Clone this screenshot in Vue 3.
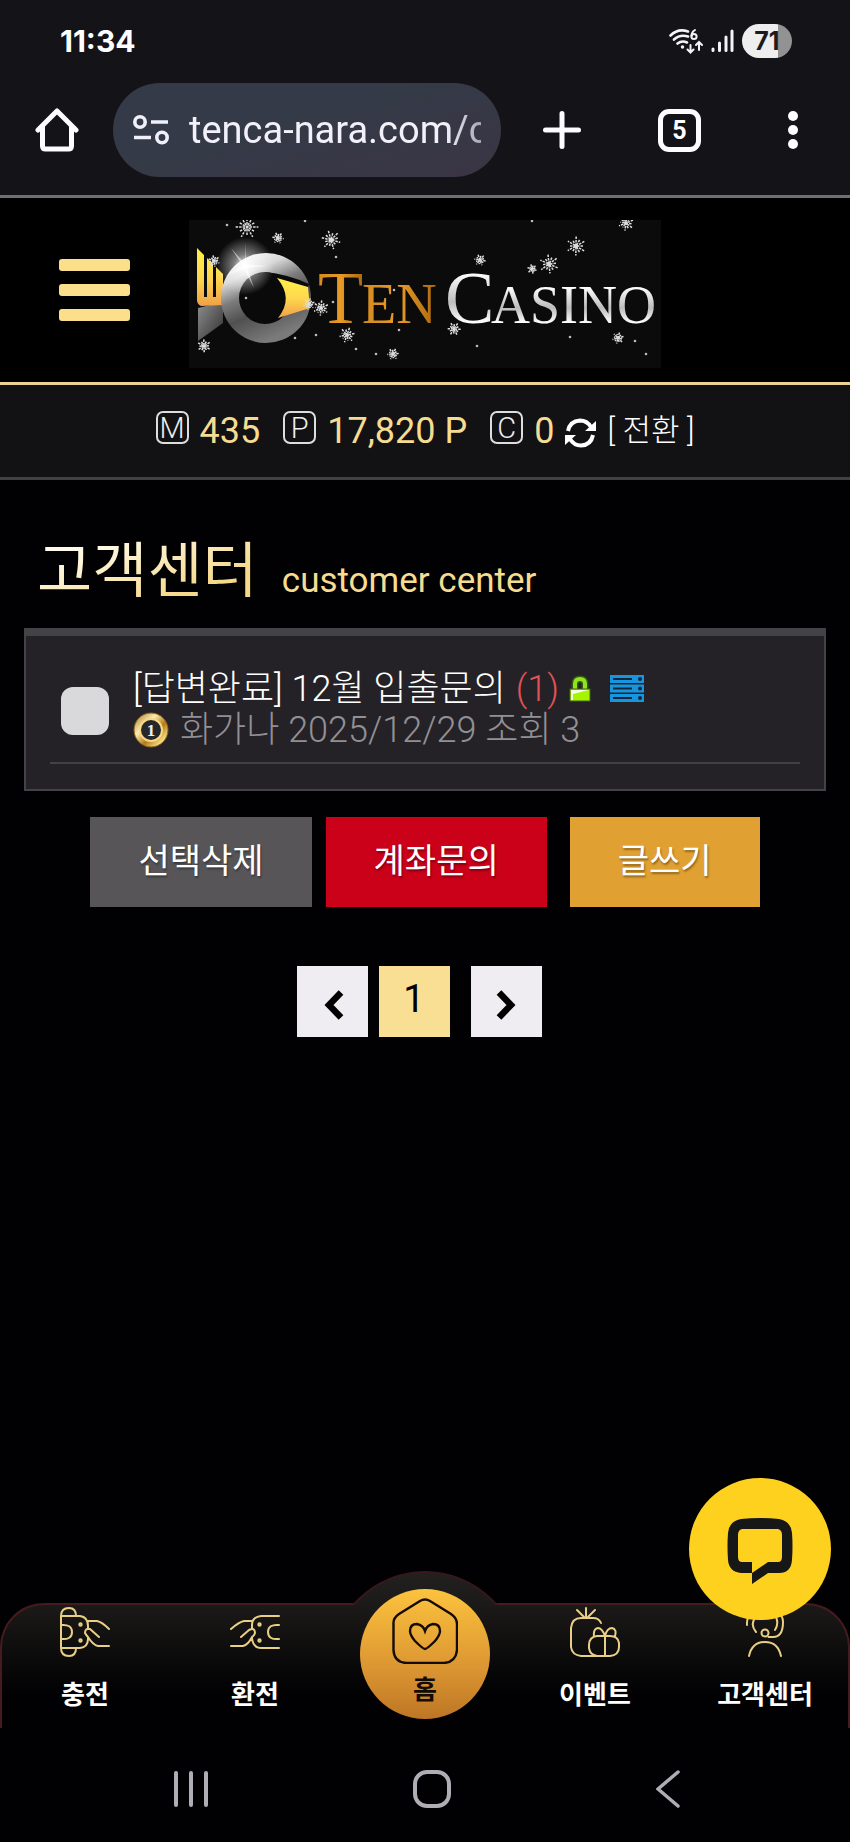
<script setup>
import { ref } from 'vue'

const url = ref('tenca-nara.com/c')
const checked = ref(false)

const flakes = [
  { x: 58, y: 7, r: 12 }, { x: 89, y: 18, r: 6 }, { x: 142, y: 20, r: 10 }, { x: 25, y: 41, r: 6 },
  { x: 15, y: 126, r: 7 }, { x: 132, y: 88, r: 8 }, { x: 120, y: 84, r: 6 }, { x: 158, y: 115, r: 8 },
  { x: 204, y: 134, r: 6 }, { x: 265, y: 109, r: 7 }, { x: 291, y: 40, r: 6 }, { x: 343, y: 49, r: 5 },
  { x: 360, y: 44, r: 10 }, { x: 387, y: 26, r: 10 }, { x: 437, y: 3, r: 8 }, { x: 429, y: 118, r: 6 }
]
const dots = [
  [38, 5], [147, 37], [106, 118], [127, 115], [167, 129], [187, 134], [57, 78], [144, 82],
  [205, 70], [210, 110], [288, 126], [381, 117], [446, 121], [457, 134], [343, 1], [116, 1]
]
const angles = [0, 30, 60, 90, 120, 150]
</script>

<template>
  <div class="phone">
    <div class="status">
      <span class="time">11:34</span>
      <div class="status-icons">
        <svg class="wifi" width="34" height="26" viewBox="0 0 34 26" fill="none" stroke="#f4f4f6" stroke-width="2.6" stroke-linecap="round">
          <path d="M1.500 7.500Q9 0 19 3.500M5 11.500Q11 6 19 8.500M8.500 15.500Q13 12 18 14.500" />
          <circle cx="13.500" cy="19" r="1" fill="#f4f4f6" stroke-width="1.500" />
          <path d="M26 2Q22.500 4 22.500 8" stroke-width="2" /><circle cx="25" cy="8.500" r="2.600" stroke-width="2" />
          <path d="M21.500 17V24M18.500 21.500L21.500 24.500L24.500 21.500M30 22V14M27 17L30 14L33 17" stroke-width="2" />
        </svg>
        <svg class="signal" width="23" height="24" viewBox="0 0 23 24" stroke="#f4f4f6" stroke-width="3" stroke-linecap="round">
          <path d="M2 20V21.500M8.500 14V21.500M15 8V21.500M21 2V21.500" />
        </svg>
        <span class="battery">71</span>
      </div>
    </div>

    <div class="toolbar">
      <button class="plain home-btn" aria-label="Home">
        <svg width="44" height="44" viewBox="0 0 44 44" fill="none" stroke="#fdfcff" stroke-width="5" stroke-linejoin="round" stroke-linecap="round">
          <path d="M3 22L22 3L41 22M7.500 19V38Q7.500 41 10.500 41H33.500Q36.500 41 36.500 38V19" />
        </svg>
      </button>
      <div class="address">
        <svg width="36" height="30" viewBox="0 0 36 30" fill="none" stroke="#f0f0fa" stroke-width="3.600">
          <circle cx="7" cy="7" r="5.200" /><path d="M18 7H35M1 22.500H18" /><circle cx="29" cy="22.500" r="5.200" />
        </svg>
        <input v-model="url" class="url" aria-label="Address" type="text">
      </div>
      <button class="plain plus-btn" aria-label="New tab">
        <svg width="38" height="38" viewBox="0 0 38 38" stroke="#fdfcff" stroke-width="5" stroke-linecap="round"><path d="M19 2.500V35.500M2.500 19H35.500" /></svg>
      </button>
      <button class="tabs">5</button>
      <button class="plain dots-btn" aria-label="Menu">
        <svg width="10" height="38" viewBox="0 0 10 38" fill="#fdfcff"><circle cx="5" cy="5" r="5" /><circle cx="5" cy="19" r="5" /><circle cx="5" cy="33" r="5" /></svg>
      </button>
    </div>

    <header class="site-head">
      <button class="burger" aria-label="Menu"><i /><i /><i /></button>
      <a href="#" class="logo" aria-label="Ten Casino">
        <svg width="472" height="148" viewBox="0 0 472 148">
          <defs>
            <linearGradient id="ring" x1="0" y1="0" x2="0.450" y2="1">
              <stop offset="0.050" stop-color="#fff" /><stop offset="0.300" stop-color="#d8d8d8" />
              <stop offset="0.500" stop-color="#7c7c7c" /><stop offset="0.700" stop-color="#505050" /><stop offset="1" stop-color="#7a7a7a" />
            </linearGradient>
            <linearGradient id="gold" x1="0" y1="0" x2="0" y2="1">
              <stop offset="0" stop-color="#fff048" /><stop offset="0.500" stop-color="#ffd84e" /><stop offset="1" stop-color="#f0a047" />
            </linearGradient>
            <linearGradient id="ten" x1="0" y1="0" x2="1" y2="0">
              <stop offset="0" stop-color="#d48a20" /><stop offset="0.500" stop-color="#e79a25" /><stop offset="1" stop-color="#a9690f" />
            </linearGradient>
            <linearGradient id="silver" x1="0" y1="0" x2="0" y2="1">
              <stop offset="0.200" stop-color="#fff" /><stop offset="0.550" stop-color="#bcbcbc" /><stop offset="0.800" stop-color="#fff" />
            </linearGradient>
            <linearGradient id="base" x1="0" y1="0" x2="1" y2="1">
              <stop offset="0" stop-color="#8e8e8e" /><stop offset="1" stop-color="#303030" />
            </linearGradient>
            <radialGradient id="glow"><stop offset="0" stop-color="#fff" /><stop offset="0.400" stop-color="#fff" stop-opacity="0.450" /><stop offset="1" stop-color="#fff" stop-opacity="0" /></radialGradient>
          </defs>
          <rect width="472" height="148" fill="#0c0b0c" />
          <path d="M9 88L34 82V103L9 121Z" fill="url(#base)" />
          <path d="M8 28L15 35V77H18V38L24 44V77H27V47L34 54V85L12 86Q8 84 8 80Z" fill="url(#gold)" />
          <circle cx="77" cy="78" r="45" fill="url(#ring)" />
          <circle cx="76" cy="78" r="26" fill="#0b0a0b" />
          <path d="M76 52Q98 54 120 64L119 68L88 60Q100 78 89 97L84 103Q96 80 76 52Z" fill="#0b0a0b" />
          <path d="M88 58L119 67L121 88L89 98Q105 78 88 58Z" fill="url(#gold)" />
          <circle cx="56" cy="46" r="29" fill="url(#glow)" />
          <path d="M56 22L57 44L78 46L58 48L65 68L55 49L36 56L54 46L42 28L56 44Z" fill="#fff" opacity="0.550" />
          <g font-family="'Liberation Serif', serif">
            <g fill="url(#ten)"><text x="129" y="103" font-size="74">T</text><text x="173" y="103" font-size="56">EN</text></g>
            <g fill="url(#silver)"><text x="256" y="103" font-size="74">C</text><text x="302" y="103" font-size="54">ASINO</text></g>
          </g>
          <g stroke="#ddd" fill="none">
            <g v-for="(f, i) in flakes" :key="i">
              <line v-for="(a, k) in angles" :key="a" :x1="f.x - f.r * (k % 2 ? 0.7 : 0.95)" :x2="f.x + f.r * (k % 2 ? 0.7 : 0.95)" :y1="f.y" :y2="f.y" :transform="`rotate(${a + i * 7} ${f.x} ${f.y})`" stroke-width="1.500" stroke-dasharray="2.500 1" />
            </g>
          </g>
          <circle v-for="(d, i) in dots" :key="i" :cx="d[0]" :cy="d[1]" r="1.300" fill="#bbb" />
        </svg>
      </a>
    </header>

    <section class="wallet">
      <span class="coin">M</span><b class="amount">435</b>
      <span class="coin spaced">P</span><b class="amount">17,820 P</b>
      <span class="coin spaced">C</span><b class="amount">0</b>
      <button class="plain" aria-label="새로고침">
        <svg class="refresh" width="31" height="32" viewBox="0 0 31 32" fill="none" stroke="#fff" stroke-width="4">
          <path d="M3 14Q5 4 15 3.500Q22 3.500 26 10M28 18Q26 28 16 28.500Q9 28.500 5 22" />
          <path d="M31 4V14H20ZM0 28V18H11Z" fill="#fff" stroke="none" />
        </svg>
      </button>
      <a href="#" class="convert">[ 전환 ]</a>
    </section>

    <main>
      <h1><span>고객센터</span> <small>customer center</small></h1>

      <div class="card">
        <article class="post">
          <input id="pick" v-model="checked" type="checkbox" class="tick" aria-label="글 선택">
          <div class="post-text">
            <div class="line">
              <a href="#" class="subject">[답변완료] 12월 입출문의</a>
              <span class="count">(1)</span>
              <svg class="lock" width="22" height="28" viewBox="0 0 22 28">
                <path d="M6 14V9Q6 4 11 4T16 9V14" fill="none" stroke="#395417" stroke-width="7" />
                <path d="M6 14V9Q6 4 11 4T16 9V14" fill="none" stroke="#8ee51b" stroke-width="4" />
                <rect x="1" y="14" width="20" height="12" fill="#a5f500" stroke="#44601e" /><path d="M2 15H20L4 19V25H2Z" fill="#f5ffe0" />
              </svg>
              <svg width="34" height="28" viewBox="0 0 34 28">
                <g v-for="n in [0, 1, 2]" :key="n">
                  <rect x="0" :y="n * 9.5" width="34" height="8" fill="#1796df" /><rect x="3" :y="n * 9.5 + 3" width="19" height="2" fill="#10283b" /><circle cx="30" :cy="n * 9.5 + 4" r="2" fill="#10283b" />
                </g>
              </svg>
            </div>
            <div class="line meta">
              <svg width="36" height="36" viewBox="0 0 36 36">
                <defs><linearGradient id="medal" x1="0" y1="0" x2="1" y2="1"><stop offset="0" stop-color="#9c7322" /><stop offset="0.350" stop-color="#ffeab0" /><stop offset="0.600" stop-color="#b37b18" /><stop offset="0.850" stop-color="#ffe28a" /><stop offset="1" stop-color="#94640d" /></linearGradient></defs>
                <circle cx="18" cy="18" r="17" fill="url(#medal)" stroke="#896117" /><circle cx="18" cy="18" r="11" fill="#25272c" stroke="#f8d981" stroke-width="2" />
                <text x="18" y="24" text-anchor="middle" font-family="'Liberation Serif', serif" font-size="17" font-weight="700" fill="#eee">1</text>
              </svg>
              <span>화가나 2025/12/29 조회 3</span>
            </div>
          </div>
        </article>
      </div>

      <div class="actions">
        <button class="act grey">선택삭제</button>
        <button class="act red">계좌문의</button>
        <button class="act amber">글쓰기</button>
      </div>

      <nav class="pager" aria-label="페이지">
        <a href="#" class="page" aria-label="이전"><svg width="20" height="30" viewBox="0 0 20 30" fill="none" stroke="#000" stroke-width="6.500"><path d="M17 2.500L5 15L17 27.500" /></svg></a>
        <a href="#" class="page current">1</a>
        <a href="#" class="page next" aria-label="다음"><svg width="20" height="30" viewBox="0 0 20 30" fill="none" stroke="#000" stroke-width="6.500"><path d="M3 2.500L15 15L3 27.500" /></svg></a>
      </nav>
    </main>

    <nav class="dock" aria-label="메뉴">
      <span class="bump" />
      <div class="dock-items">
        <a href="#" class="dock-item">
          <svg class="line-icon" width="50" height="50" viewBox="0 0 50 50">
            <path d="M1 9V41Q1 49 9 49Q16 49 16 41M1 9Q1 1 9 1Q16 1 16 9M1 9H20Q28 10 28 19V22M28 30V32Q28 40 20 41H1M1 18Q12 17 12 25Q12 33 1 32M28 14H37Q42 15 49 22M39 30L30 22Q25 21 25 26Q26 28 28 30Q33 38 38 39H49" />
            <circle cx="20.500" cy="17.500" r="1.200" /><circle cx="20.500" cy="33.500" r="1.200" />
          </svg>
          <span>충전</span>
        </a>
        <a href="#" class="dock-item">
          <svg class="line-icon" width="50" height="50" viewBox="0 0 50 50">
            <path d="M49 9H31Q22 10 22 18V22M22 30V31Q23 41 31 41H49M49 18Q38 17 38 25Q38 33 49 32M22 14H14Q9 15 1 22M11 30L19 23Q25 20 25 26Q24 29 22 30Q18 38 13 39H1" />
            <circle cx="29.500" cy="17.500" r="1.200" /><circle cx="29.500" cy="33.500" r="1.200" />
          </svg>
          <span>환전</span>
        </a>
        <a href="#" class="dock-item home">
          <svg width="66" height="66" viewBox="0 0 66 66" fill="none" stroke="#140b05" stroke-width="2.400">
            <path d="M28 3Q33 0 38 3L59 16Q65 20 65 26V52Q64 64 52 65H14Q2 64 1.500 52V26Q1 20 7 16Z" />
            <path d="M33 51Q31 51 23 43Q18 37 18 33Q18 26 25 26Q31 27 33 33Q35 27 41 26Q48 26 48 33Q48 37 43 43Q35 51 33 51Z" />
          </svg>
          <span>홈</span>
        </a>
        <a href="#" class="dock-item">
          <svg class="line-icon" width="50" height="50" viewBox="0 0 50 50">
            <path d="M16 11V1M14 10L7 3M18 10L25 3M31 16Q29 11 23 11H11Q2 11 1 21V40Q2 48 11 49H40Q49 48 49 40V36Q48 29 40 29H27Q19 30 19 38V41Q20 48 27 49M35 29V49M35 29Q32 21 28 21Q23 22 24 29M35 29Q37 21 42 21Q47 22 45 29" />
          </svg>
          <span>이벤트</span>
        </a>
        <a href="#" class="dock-item">
          <svg class="line-icon" width="50" height="50" viewBox="0 0 50 50">
            <path d="M7 18Q6 3 25 2Q43 3 43 15Q43 30 33 30H28.500M16 25Q10 18 15 11M35 23Q39 17 36 10M9 49Q12 35 25 35Q38 35 41 49" /><circle cx="25" cy="26" r="3.500" />
          </svg>
          <span>고객센터</span>
        </a>
      </div>
      <button class="chat" aria-label="채팅">
        <svg width="66" height="66" viewBox="0 0 66 66"><path fill="#171717" fill-rule="evenodd" d="M14 1Q33 -1 52 1Q64 3 65 15Q66 28 65 42Q64 55 52 55H41L25 66V55H14Q2 54 1 42Q0 28 1 15Q2 3 14 1ZM15 11Q11 12 11 17V39Q11 44 15 44H25V55L41 44H51Q55 44 55 39V17Q55 12 51 11Z" /></svg>
      </button>
    </nav>

    <div class="system">
      <button class="plain" aria-label="Recents"><svg width="34" height="38" viewBox="0 0 34 38" stroke="#b1adb4" stroke-width="4" stroke-linecap="round"><path d="M2 3V35M17 3V35M32 3V35" /></svg></button>
      <button class="plain" aria-label="Home"><svg width="38" height="38" viewBox="0 0 38 38" fill="none" stroke="#b1adb4" stroke-width="4"><rect x="2" y="2" width="34" height="34" rx="12" /></svg></button>
      <button class="plain" aria-label="Back"><svg width="24" height="38" viewBox="0 0 24 38" fill="none" stroke="#b1adb4" stroke-width="3.500" stroke-linecap="round"><path d="M22 2L2 19L22 36" /></svg></button>
    </div>
  </div>
</template>

<style>
body { margin: 0; background: #000; }
</style>

<style scoped>
* { box-sizing: border-box; }
.phone {
  display: flex;
  flex-direction: column;
  min-height: 100vh;
  background: #010002;
  color: #fff;
  font-family: Roboto, "Noto Sans CJK KR", sans-serif;
}
button { font-family: inherit; cursor: pointer; }
a { color: inherit; text-decoration: none; }
svg { display: block; flex: none; }
.plain { padding: 0; border: 0; background: none; }

.status {
  display: flex;
  justify-content: space-between;
  align-items: center;
  height: 83px;
  padding: 0 58px 2px 60px;
  background: #141318;
}
.time { font: 700 30px/36px Inter, sans-serif; }
.status-icons { display: flex; align-items: center; gap: 8px; }
.battery {
  width: 50px;
  height: 34px;
  border-radius: 17px;
  background: linear-gradient(90deg, #eee 72%, #929292 72%);
  color: #1b1b1f;
  font: 700 25px/34px Inter, sans-serif;
  text-align: center;
}
.toolbar {
  display: flex;
  align-items: center;
  padding: 0 52px 18px 35px;
  border-bottom: 3px solid #706f78;
  background: #141318;
}
.address {
  display: flex;
  flex: 1;
  align-items: center;
  gap: 20px;
  min-width: 0;
  height: 94px;
  margin: 0 42px 0 34px;
  padding: 0 20px;
  border-radius: 47px;
  background: linear-gradient(165deg, #343a47 40%, #3a3544);
}
.url {
  flex: 1;
  min-width: 0;
  width: 0;
  height: 60px;
  padding: 0;
  border: 0;
  outline: 0;
  background: none;
  color: #f2f1fa;
  font: 400 38px/60px Roboto, sans-serif;
  -webkit-mask-image: linear-gradient(90deg, #000 88%, rgba(0, 0, 0, 0.6));
  mask-image: linear-gradient(90deg, #000 88%, rgba(0, 0, 0, 0.6));
}
.tabs {
  flex: none;
  width: 43px;
  height: 43px;
  margin: 0 87px 0 77px;
  padding: 0;
  border: 5px solid #fdfcff;
  border-radius: 11px;
  background: none;
  color: #fff;
  font: 700 25px/33px Roboto, sans-serif;
}

.site-head {
  display: grid;
  grid-template-columns: 1fr auto 1fr;
  align-items: center;
  padding: 22px 0 14px;
  border-bottom: 3px solid #ecd292;
  background: #000;
}
.burger {
  display: flex;
  flex-direction: column;
  gap: 13px;
  width: 71px;
  margin: 0 0 8px 59px;
  padding: 0;
  border: 0;
  background: none;
}
.burger i { height: 12px; border-radius: 3px; background: #fcdf8b; }

.wallet {
  display: flex;
  justify-content: center;
  align-items: center;
  gap: 11px;
  height: 95px;
  border-bottom: 3px solid #414042;
  background: #121114;
}
.coin {
  width: 33px;
  height: 33px;
  margin-bottom: 8px;
  border: 2px solid #ddd;
  border-radius: 7px;
  color: #eee;
  font: 300 29px/30px Roboto, sans-serif;
  text-align: center;
}
.spaced { margin-left: 12px; }
.amount { color: #f6dc91; font-weight: 400; font-size: 36px; line-height: 40px; }
.refresh { margin-top: 4px; }
.convert { font-weight: 300; font-size: 31px; line-height: 40px; }

main { flex: 1; padding: 0 24px; }
h1 {
  display: flex;
  align-items: baseline;
  gap: 24px;
  margin: 0;
  padding: 44px 13px 20px;
  font: 400 60px/84px "Noto Sans CJK KR", sans-serif;
}
h1 span {
  background: linear-gradient(160deg, #fffbe8 25%, #f6d88a 75%);
  -webkit-background-clip: text;
  background-clip: text;
  color: transparent;
}
h1 small { color: #f6dc91; font: 400 35px/40px Roboto, sans-serif; }
.card {
  padding: 32px 24px 25px;
  border: 2px solid #434244;
  border-top-width: 8px;
  background: #242226;
}
.post { display: flex; align-items: center; gap: 24px; padding: 0 0 12px 11px; border-bottom: 2px solid #434144; }
.tick {
  appearance: none;
  flex: none;
  width: 48px;
  height: 48px;
  margin: 4px 0 0;
  border-radius: 12px;
  background: #d9d9dc;
}
.tick:checked { background: #f6dc91; }
.line { display: flex; align-items: center; height: 42px; font: 300 36px/42px Roboto, "Noto Sans CJK KR", sans-serif; white-space: nowrap; }
.count { margin: 0 10px; color: #e15359; }
.lock { margin-right: 19px; }
.meta { gap: 11px; height: 40px; color: #929094; }

.actions { display: flex; justify-content: center; gap: 14px; margin-top: 26px; }
.act {
  height: 90px;
  padding: 0 48px 6px;
  border: 0;
  color: #fff;
  font: 400 34px/40px "Noto Sans CJK KR", sans-serif;
  text-shadow: 1px 2px 2px rgba(0, 0, 0, 0.35);
}
.grey { background: #575558; }
.red { background: #cb0019; }
.amber { margin-left: 9px; background: #e0a032; }
.pager { display: flex; justify-content: center; gap: 11px; margin-top: 59px; padding-right: 12px; }
.page {
  display: flex;
  justify-content: center;
  align-items: center;
  width: 71px;
  height: 71px;
  padding: 6px 0 0 4px;
  background: #efedf1;
}
.current { padding: 0 0 6px; background: #f8df94; color: #000; font: 400 38px/44px Roboto, sans-serif; }
.next { margin-left: 10px; padding-left: 0; }

.dock { position: relative; height: 125px; }
.dock::before {
  content: "";
  position: absolute;
  inset: 0;
  border: 2px solid #451b20;
  border-bottom: 0;
  border-radius: 44px 44px 0 0;
  background: linear-gradient(#1b1a18, #010002 75%);
}
.bump {
  position: absolute;
  top: -32px;
  left: calc(50% - 95px);
  width: 190px;
  height: 190px;
  border-radius: 50%;
  border: 2px solid #38181c;
  background: linear-gradient(#222120, #1b1a18 17%, #010002 66%);
  clip-path: inset(0 0 156px 0);
}
.dock-items { position: relative; display: grid; grid-template-columns: repeat(5, 1fr); }
.dock-item { display: flex; flex-direction: column; align-items: center; gap: 18px; padding-top: 4px; font: 700 26px/36px "Noto Sans CJK KR", sans-serif; }
.line-icon { fill: none; stroke: #e9cf86; stroke-width: 2; stroke-linecap: round; stroke-linejoin: round; }
.home {
  gap: 6px;
  justify-self: center;
  width: 130px;
  height: 130px;
  margin: -14px 0 -20px;
  padding-top: 9px;
  border-radius: 50%;
  background: linear-gradient(#fcc33e, #dc9632 60%, #bd7624);
  color: #140b05;
}
.chat {
  position: absolute;
  top: -125px;
  right: 19px;
  display: flex;
  justify-content: center;
  align-items: center;
  width: 142px;
  height: 142px;
  padding: 4px 0 0;
  border: 0;
  border-radius: 50%;
  background: #ffd11f;
}
.system {
  display: flex;
  justify-content: space-between;
  align-items: center;
  height: 114px;
  padding: 8px 170px 0 174px;
}
</style>
